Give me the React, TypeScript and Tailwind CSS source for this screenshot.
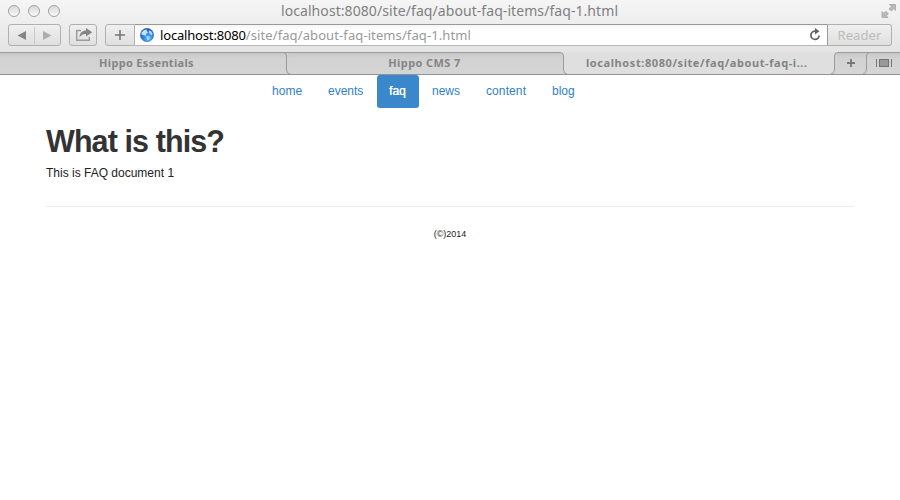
import React from "react";

const lucida = "font-['Noto_Sans','Open_Sans',sans-serif]";
const helvetica = "font-['Liberation_Sans',Arial,sans-serif]";

function Lights() {
  return (
    <div className="flex w-[54px] gap-2">
      {[0, 1, 2].map((i) => (
        <span key={i} className="size-3 rounded-full border border-[#a2a2a2] bg-linear-to-b from-[#d9d9d9] to-[#f8f8f8]" />
      ))}
    </div>
  );
}

function TitleBar() {
  return (
    <div className="flex h-6 items-start pl-2">
      <div className="pt-[5px]"><Lights /></div>
      <div className="flex-1 pl-[219px] text-[14px] leading-[21px] tracking-[0.07px] text-[#808080]">
        <span className="whitespace-nowrap">localhost:8080/site/faq/about-faq-items/faq-1.html</span>
      </div>
      <svg className="mr-[3px] mt-[3px]" width="16" height="16" viewBox="0 0 16 16">
        <g fill="#b8b8b8" stroke="#a0a0a0" strokeWidth="0.7">
          <path d="M8.5 1.5H14.5V7.5L12.6 5.8L10.2 8L8 5.8L10.4 3.6Z" />
          <path d="M1 8.5V14.5H7L5.3 12.8L7.4 10.7L5 8.4L2.9 10.4Z" />
        </g>
      </svg>
    </div>
  );
}

const button = "flex h-[22px] items-center justify-center border border-[#b0b0b0] bg-linear-to-b from-[#f0f0f0] to-[#dfdfdf]";

function Toolbar() {
  return (
    <div className="flex h-7 items-start px-2">
      <div className={button + " w-[53px] rounded-[3px]"}>
        <svg width="51" height="20" viewBox="0 0 51 20">
          <path d="M8.5 10.5L17 6V15Z" fill="#858585" />
          <path d="M25.5 2V19" stroke="#c8c8c8" />
          <path d="M42.5 10.5L34 6V15Z" fill="#adadad" />
        </svg>
      </div>
      <div className={button + " ml-2 w-7 rounded-[3px]"}>
        <svg width="26" height="20" viewBox="0 0 26 20">
          <path d="M11 5.5H6.7V15.3H19.3V12" fill="none" stroke="#9a9a9a" strokeWidth="1.4" />
          <path d="M16 3L22.2 7.3L16 11.5V9C13 8.8 11 10 9.5 12.5C9.6 8.3 12 5.4 16 5.5Z" fill="#858585" />
        </svg>
      </div>
      <div className={button + " ml-2 w-[30px] rounded-l-[3px]"}>
        <svg width="12" height="12" viewBox="0 0 12 12">
          <path d="M6 1V11M1 6H11" stroke="#777" strokeWidth="1.6" />
        </svg>
      </div>
      <div className="flex h-[22px] w-[692px] items-center border-y border-t-[#999] border-b-[#b5b5b5] bg-linear-to-b from-[#f5f5f5] via-white via-25% to-white">
        <svg className="ml-[5px] shrink-0" width="14" height="14" viewBox="0 0 14 14">
          <defs>
            <radialGradient id="globe" cx="0.6" cy="0.75" r="0.75">
              <stop offset="0" stopColor="#70c7ff" />
              <stop offset="0.45" stopColor="#328ae5" />
              <stop offset="1" stopColor="#164caa" />
            </radialGradient>
          </defs>
          <circle cx="7" cy="7" r="6.7" fill="url(#globe)" stroke="#3767ad" strokeWidth="0.5" />
          <path d="M1.5 4.5L4 2L7 1.5L6.8 3L8 4.3L6.3 6L5.2 7.8L3.4 7L1.6 6.8Z" fill="#c2e2fc" />
          <path d="M9 2.2L11.4 3.4L12.6 6L11.6 7.2L10 6.2L8.6 4.4ZM6.5 7.8L9.6 8.8L9.2 11L7.8 12.8L7 10.5Z" fill="#a9d8fa" />
        </svg>
        <span className="ml-[6px] whitespace-nowrap text-[13px] leading-5 tracking-[0.1px] text-[#999]">
          <span className="tracking-[-0.17px] text-black">localhost:8080</span>/site/faq/about-faq-items/faq-1.html
        </span>
        <svg className="ml-auto mr-[6px]" width="12" height="14" viewBox="0 0 12 14">
          <path d="M7 3.2H5.7A4.1 4.1 0 1 0 10.1 7.5" fill="none" stroke="#626262" strokeWidth="1.8" />
          <path d="M6 0L10.5 3.3L6 6.6Z" fill="#626262" />
        </svg>
      </div>
      <div className={button + " w-[65px] rounded-r-[3px] border-l-[#999] text-[13px] leading-5 tracking-[0.12px] text-[#bcbcbc]"}>Reader</div>
    </div>
  );
}

const recess = "h-full bg-linear-to-b from-[#c6c6c6] via-[#d2d2d2] via-25% to-[#d5d5d5]";
const inactive = recess + " border-t border-[#9b9b9b]";

// Curved edge between two tabs; "lit" paints the side that belongs to the front tab.
function Edge({ flip = false, lit = false }: { flip?: boolean; lit?: boolean }) {
  return (
    <div className={recess + " w-2 shrink-0"}>
      <svg className={flip ? "-scale-x-100" : ""} width="8" height="22" viewBox="0 0 8 22">
        {lit ? (
          <path d="M0 0H8V22Q4.5 21.5 4.5 18V4Q4.5 0.5 1 0.5H0Z" fill="#dfdfdf" />
        ) : (
          <path d="M1 0.5H8" fill="none" stroke="#9b9b9b" />
        )}
        <path d="M0 0.5H1Q4.5 0.5 4.5 4V18Q4.5 21.5 8 22" fill="none" stroke="#9b9b9b" />
      </svg>
    </div>
  );
}

function Tabs() {
  return (
    <div className="flex h-[23px] border-b border-[#929292] text-[11px] font-bold leading-[19px] text-[#848484]">
      <div className={inactive + " w-[282px] pl-[11px] text-center"}><span className="tracking-[0.32px]">Hippo Essentials</span></div>
      <Edge />
      <div className={inactive + " w-[269px] text-center"}><span className="tracking-[0.4px]">Hippo CMS 7</span></div>
      <Edge lit />
      <div className="h-full w-[264px] whitespace-nowrap bg-[#dfdfdf] pl-[19px] pt-px">
        <span className="tracking-[0.58px]">localhost:8080/site/faq/about-faq-i...</span>
      </div>
      <Edge flip lit />
      <div className={inactive + " flex w-[24px] items-center justify-center"}>
        <svg className="mb-px" width="10" height="10" viewBox="0 0 10 10"><path d="M5 1V9M1 5H9" stroke="#777" strokeWidth="1.8" /></svg>
      </div>
      <Edge flip />
      <div className={inactive + " flex flex-1 items-center justify-center pr-[3px]"}>
        <svg className="mb-px" width="16" height="9" viewBox="0 0 16 9">
          <path d="M0.5 0V8M15.5 0V8" stroke="#777" />
          <path d="M3 0H13V8H3Z" fill="#999" />
          <path d="M3 0.5H13M3 7.5H13M3.5 0V8M12.5 0V8" stroke="#737373" fill="none" />
        </svg>
      </div>
    </div>
  );
}

function Nav() {
  return (
    <nav className="flex h-[33px] pl-[260px] text-[12px] leading-[32px] text-[#3080c8]">
      <a className="w-[56px] pl-3 tracking-[0.05px]">home</a>
      <a className="w-[61px] pl-3">events</a>
      <a className="w-[42px] rounded-[3px] bg-[#3a87cb] pl-3 text-white [text-shadow:0.3px_0_0_white]">faq</a>
      <a className="ml-px w-[54px] pl-3">news</a>
      <a className="w-[66px] pl-3 tracking-[0.1px]">content</a>
      <a className="pl-3">blog</a>
    </nav>
  );
}

export default function App() {
  return (
    <div className="h-[500px] w-[900px] overflow-hidden bg-white">
      <header className={lucida + " h-[75px] bg-linear-to-b from-[#f5f5f5] via-[#e9e9e9] via-50% to-[#dcdcdc]"}>
        <TitleBar />
        <Toolbar />
        <Tabs />
      </header>
      <main className={helvetica}>
        <Nav />
        <section className="mx-[46px] h-[99px] border-b border-[#ececec] pt-[16px]">
          <h1 className="text-[30.5px] font-bold leading-[34px] tracking-[-0.9px] text-[#333]">What is this?</h1>
          <p className="mt-[7px] text-[12px] leading-[17px] text-[#222]">This is FAQ document 1</p>
        </section>
        <footer className="pt-[21px] text-center text-[9px] leading-[13px] text-[#222]">(©)2014</footer>
      </main>
    </div>
  );
}
